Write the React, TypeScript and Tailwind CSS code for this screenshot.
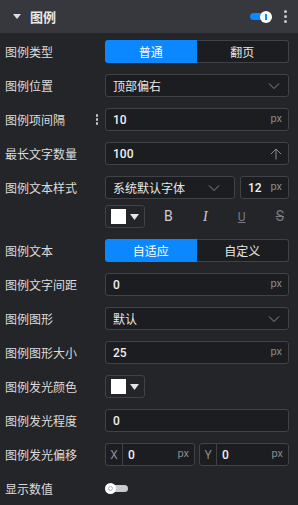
import React from 'react';

const font = { fontFamily: '"Noto Sans CJK SC", "Noto Sans", sans-serif' };

const Label: React.FC<{ text: string }> = ({ text }) => (
  <div className="w-[100px] shrink-0 text-[12px] text-[#dcdcdc] leading-none">{text}</div>
);

const Chevron = () => (
  <svg width="12" height="8" viewBox="0 0 12 8" fill="none" stroke="#8a8b90" strokeWidth="1">
    <path d="M1 1.5 L6 6.5 L11 1.5" />
  </svg>
);

const Box: React.FC<{ children: React.ReactNode; className?: string }> = ({ children, className }) => (
  <div
    className={`h-[23px] flex items-center rounded-[3px] border border-[#414247] bg-[#1c1d20] ${className ?? ''}`}
  >
    {children}
  </div>
);

const NumInput: React.FC<{ value: string; unit?: React.ReactNode }> = ({ value, unit }) => (
  <Box className="flex-1 pl-[7px] pr-[6px]">
    <span
      className="flex-1 text-[12px] font-medium text-[#f0f0f0]"
      style={{ fontFamily: 'Roboto, "Noto Sans CJK SC", sans-serif' }}
    >
      {value}
    </span>
    {unit}
  </Box>
);

const Px = () => (
  <span className="text-[11px] text-[#8a8b90]" style={{ fontFamily: 'Roboto, sans-serif' }}>
    px
  </span>
);

const Select: React.FC<{ value: string; className?: string }> = ({ value, className }) => (
  <Box className={`pl-[7px] pr-[8px] ${className ?? 'flex-1'}`}>
    <span className="flex-1 text-[12px] text-[#e6e6e6]">{value}</span>
    <Chevron />
  </Box>
);

const Segmented: React.FC<{ a: string; b: string }> = ({ a, b }) => (
  <div className="flex-1 h-[23px] flex text-[12px]">
    <div className="flex-1 flex items-center justify-center bg-[#0b87ff] text-white rounded-l-[3px]">{a}</div>
    <div className="flex-1 flex items-center justify-center border border-l-0 border-[#414247] bg-[#1c1d20] text-[#e6e6e6] rounded-r-[3px]">
      {b}
    </div>
  </div>
);

const ColorPick = () => (
  <div className="w-[40px] h-[23px] rounded-[3px] border border-[#414247] flex items-center pl-[5px] gap-[4px]">
    <div className="w-[15px] h-[15px] bg-white" />
    <svg width="9" height="6" viewBox="0 0 9 6">
      <path d="M0 0 L9 0 L4.5 6 Z" fill="#e6e6e6" />
    </svg>
  </div>
);

const Row: React.FC<{ label: string; children?: React.ReactNode }> = ({ label, children }) => (
  <div className="flex items-center h-[23px]">
    <Label text={label} />
    {children}
  </div>
);

const App: React.FC = () => {
  return (
    <div className="w-[298px] h-[505px] bg-[#242528] overflow-hidden" style={font}>
      {/* header */}
      <div className="h-[33px] bg-[#37383d] flex items-center pl-[13px] pr-[11px]">
        <svg width="8" height="5" viewBox="0 0 8 5" className="mr-[9px]">
          <path d="M0 0 L8 0 L4 5 Z" fill="#e0e0e0" />
        </svg>
        <span className="text-[13px] font-bold text-[#e8e8e8] flex-1">图例</span>
        <div className="relative w-[22px] h-[12px] mr-[12px]">
          <div className="absolute left-0 top-[2.5px] w-[18px] h-[7px] rounded-full bg-[#0b87ff]" />
          <div className="absolute right-0 top-0 w-[12px] h-[12px] rounded-full bg-white flex items-center justify-center">
            <div className="w-[1.5px] h-[6px] bg-[#0b87ff]" />
          </div>
        </div>
        <div className="flex flex-col gap-[2px]">
          <div className="w-[3px] h-[3px] rounded-full bg-[#c8c8cc]" />
          <div className="w-[3px] h-[3px] rounded-full bg-[#c8c8cc]" />
          <div className="w-[3px] h-[3px] rounded-full bg-[#c8c8cc]" />
        </div>
      </div>

      <div className="flex flex-col gap-[11px] pt-[7px] pl-[5px] pr-[9px]">
        <Row label="图例类型">
          <Segmented a="普通" b="翻页" />
        </Row>
        <Row label="图例位置">
          <Select value="顶部偏右" />
        </Row>
        <div className="flex items-center h-[23px]">
          <div className="w-[100px] shrink-0 flex items-center">
            <span className="flex-1 text-[12px] text-[#dcdcdc] leading-none">图例项间隔</span>
            <div className="flex flex-col gap-[1.5px] mr-[7px]">
              <div className="w-[2.5px] h-[2.5px] rounded-full bg-[#c8c8cc]" />
              <div className="w-[2.5px] h-[2.5px] rounded-full bg-[#c8c8cc]" />
              <div className="w-[2.5px] h-[2.5px] rounded-full bg-[#c8c8cc]" />
            </div>
          </div>
          <NumInput value="10" unit={<Px />} />
        </div>
        <Row label="最长文字数量">
          <NumInput
            value="100"
            unit={
              <svg width="12" height="12" viewBox="0 0 12 12" fill="none" stroke="#8a8b90" strokeWidth="1">
                <path d="M1 6 L6 1 L11 6 M6 1 L6 11.5" />
              </svg>
            }
          />
        </Row>
        <div className="flex flex-col gap-[6px]">
          <Row label="图例文本样式">
            <Select value="系统默认字体" className="w-[130px] pr-[14px]" />
            <div className="ml-[5px] flex-1 flex">
              <NumInput value="12" unit={<Px />} />
            </div>
          </Row>
          <div className="flex items-center h-[23px] pl-[100px]">
            <ColorPick />
            <div
              className="flex-1 flex items-center justify-between pl-[19px] pr-[5px] text-[14px]"
              style={{ fontFamily: 'Roboto, sans-serif' }}
            >
              <span className="text-[#cfcfcf]">B</span>
              <span className="text-[#cfcfcf] italic" style={{ fontFamily: '"Liberation Serif", serif' }}>
                I
              </span>
              <span className="text-[#7a7b80] underline text-[12px]">U</span>
              <span className="text-[#7a7b80] line-through text-[14px]">S</span>
            </div>
          </div>
        </div>
        <Row label="图例文本">
          <Segmented a="自适应" b="自定义" />
        </Row>
        <Row label="图例文字间距">
          <NumInput value="0" unit={<Px />} />
        </Row>
        <Row label="图例图形">
          <Select value="默认" />
        </Row>
        <Row label="图例图形大小">
          <NumInput value="25" unit={<Px />} />
        </Row>
        <Row label="图例发光颜色">
          <ColorPick />
        </Row>
        <Row label="图例发光程度">
          <NumInput value="0" />
        </Row>
        <Row label="图例发光偏移">
          <div className="flex-1 flex gap-[4px]">
            {['X', 'Y'].map((k) => (
              <Box key={k} className="flex-1 pr-[5px]">
                <span
                  className="w-[17px] h-full flex items-center justify-center border-r border-[#414247] text-[12px] text-[#8a8b90]"
                  style={{ fontFamily: 'Roboto, sans-serif' }}
                >
                  {k}
                </span>
                <span
                  className="flex-1 pl-[5px] text-[12px] font-medium text-[#f0f0f0]"
                  style={{ fontFamily: 'Roboto, sans-serif' }}
                >
                  0
                </span>
                <Px />
              </Box>
            ))}
          </div>
        </Row>
        <Row label="显示数值">
          <div className="relative w-[23px] h-[11px]">
            <div className="absolute right-0 top-[2px] w-[18px] h-[7px] rounded-full bg-[#c9cad0]" />
            <div className="absolute left-0 top-0 w-[11px] h-[11px] rounded-full bg-white flex items-center justify-center">
              <div className="w-[5px] h-[5px] rounded-full border border-[#b0b0b6]" />
            </div>
          </div>
        </Row>
      </div>
    </div>
  );
};

export default App;
